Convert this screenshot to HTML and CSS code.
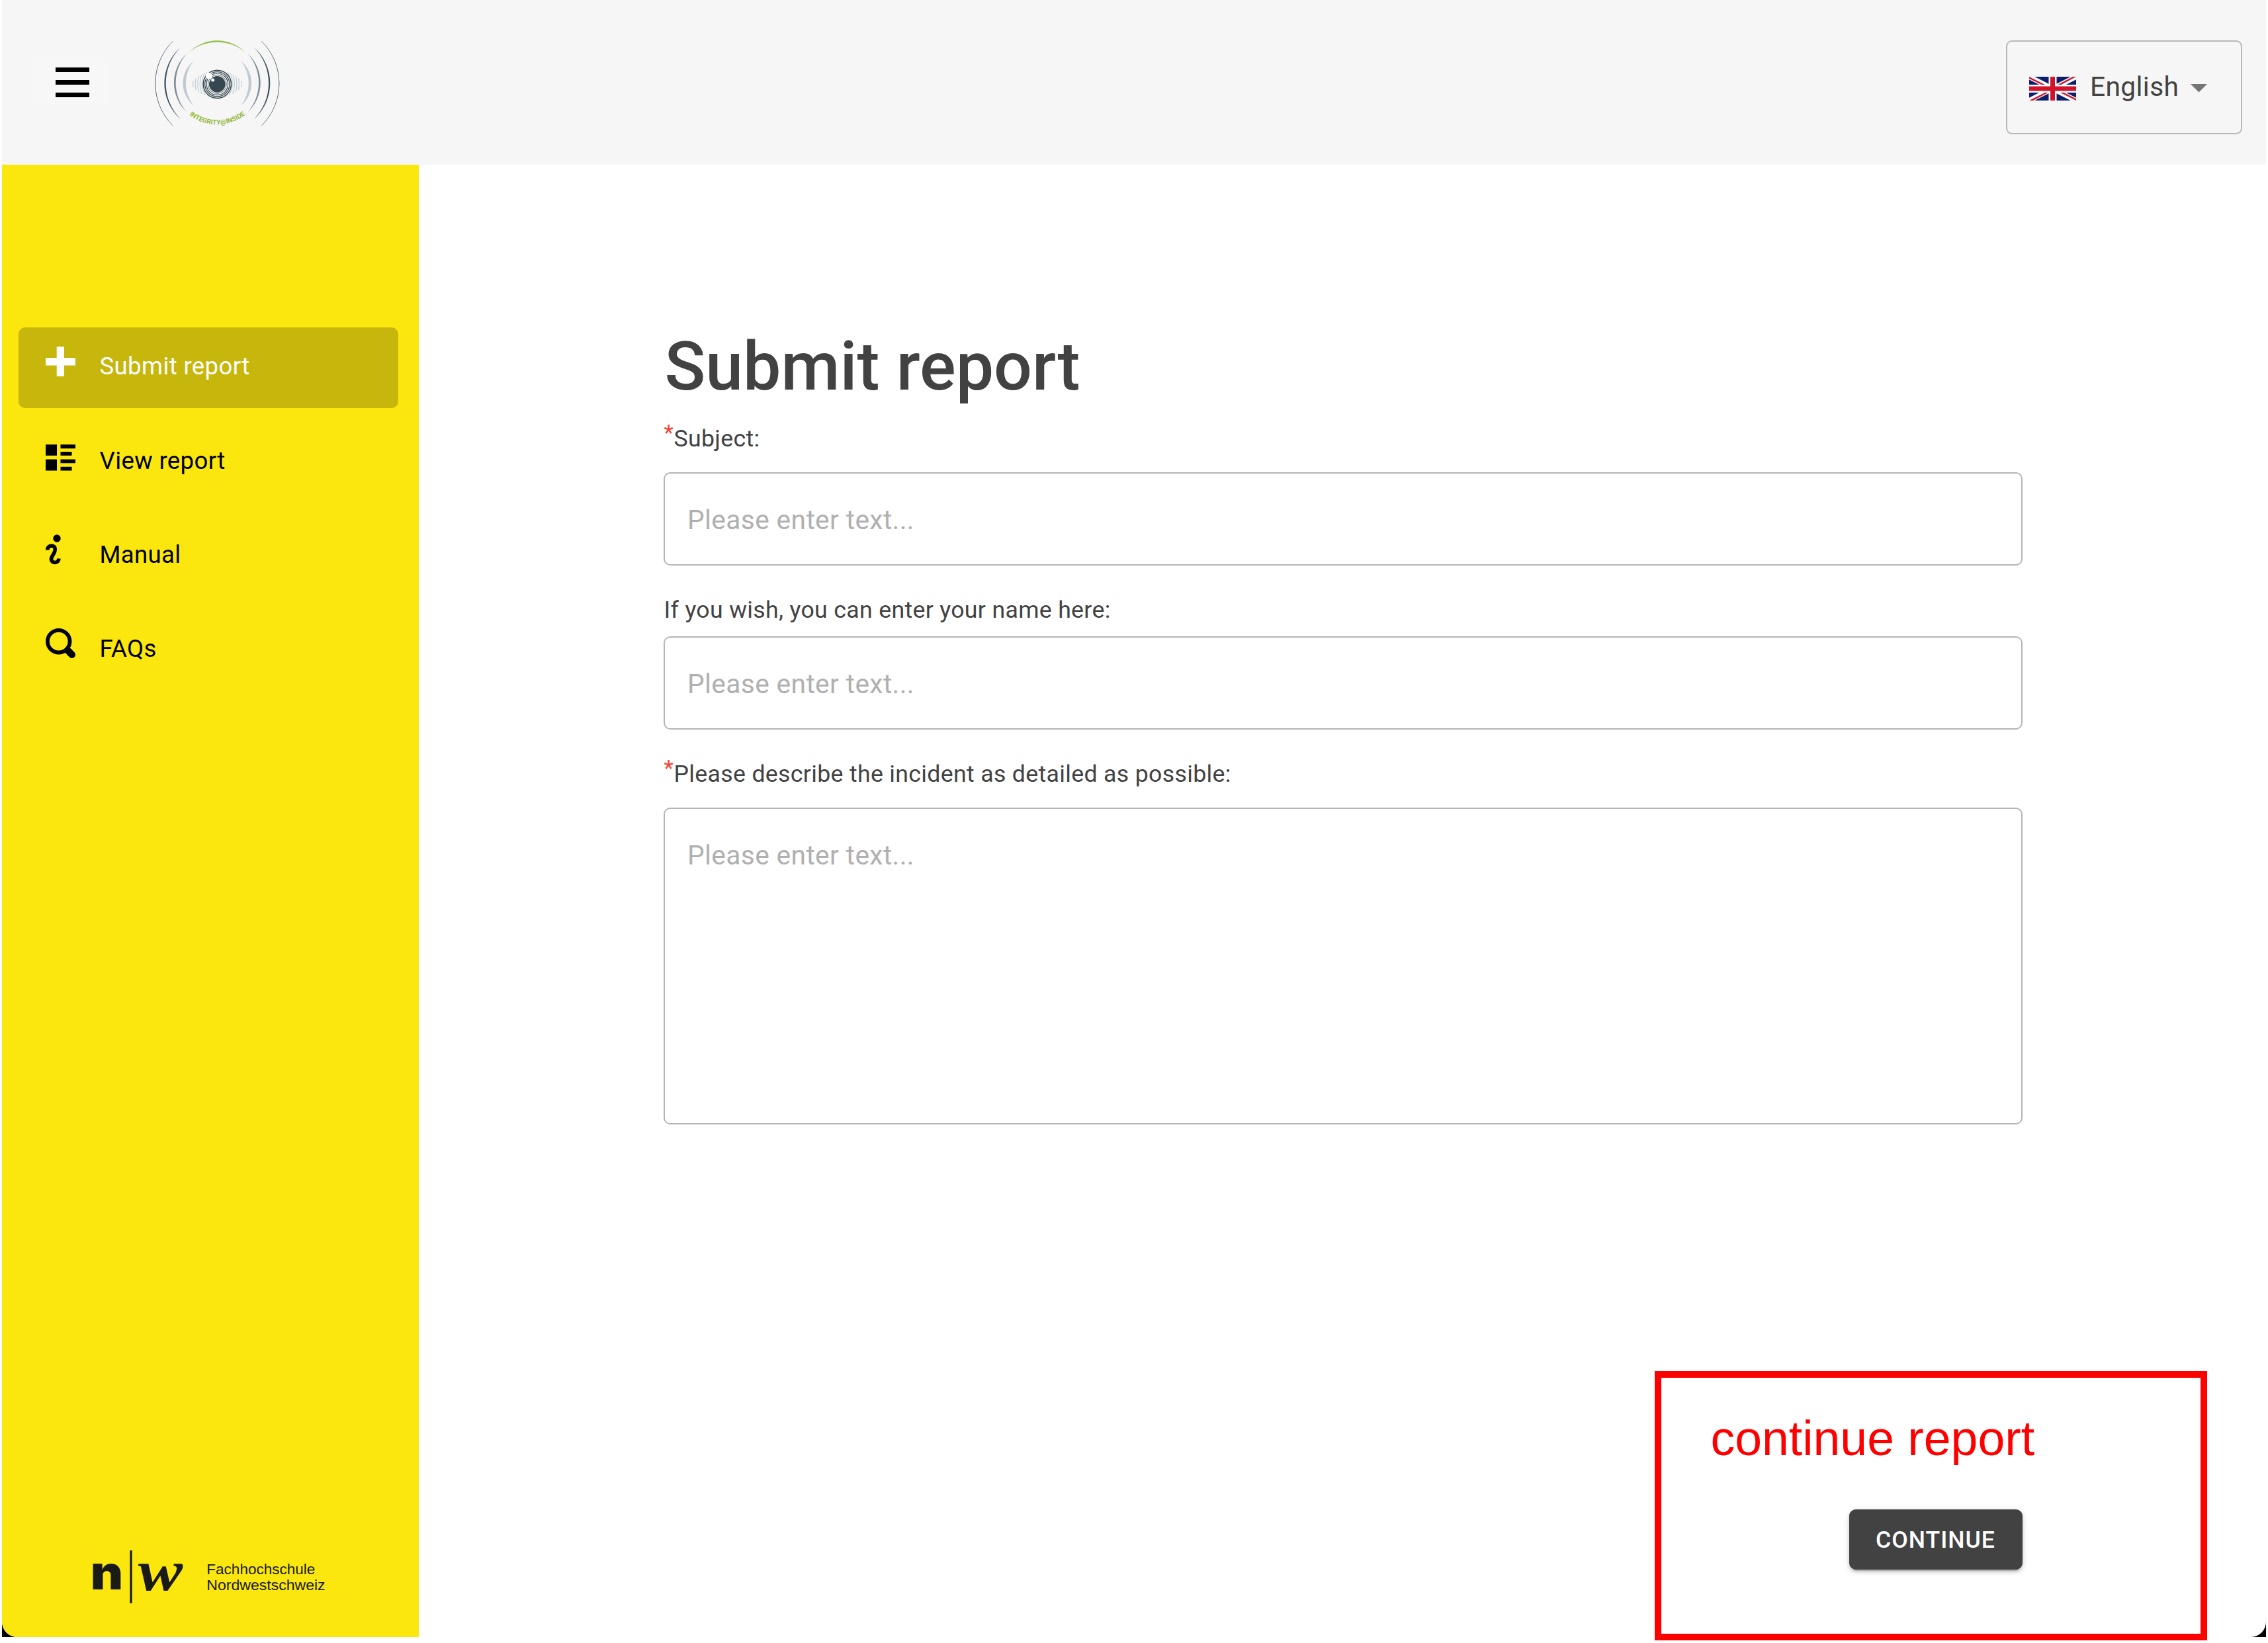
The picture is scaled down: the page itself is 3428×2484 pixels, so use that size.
FILE: index.html
```html
<!DOCTYPE html>
<html lang="en">
<head>
<meta charset="utf-8">
<title>Submit report</title>
<link rel="stylesheet" href="styles.css">
</head>
<body>
<div class="screen">
<div class="window">
  <header class="header">
    <button class="menu" aria-label="Menu">
      <svg width="51" height="45" viewBox="0 0 51 45"><path d="M0 0h51v7H0zM0 19h51v7H0zM0 38h51v7H0z"/></svg>
    </button>
    <svg class="eye" width="220" height="160" viewBox="0 0 660 480">
      <defs>
        <path id="motto" d="M198 401A205 205 0 0 0 460 394"/>
        <g id="waves">
          <path fill="#4f626d" d="M124 67A267 267 0 0 0 124 450A271 271 0 0 1 124 67"/>
          <path fill="none" stroke="#4f626d" stroke-width="2" d="M124 67A270 270 0 0 0 124 450"/>
          <path fill="#3f535e" d="M158 95A217.400 217.400 0 0 0 158 420A233 233 0 0 1 158 95"/>
          <path fill="#7c8d97" d="M186 124A181 181 0 0 0 186 388A202 202 0 0 1 186 124"/>
          <path fill="#bfcad2" d="M217 157A130 130 0 0 0 217 358A164 164 0 0 1 217 157"/>
          <g fill="none" stroke="#c6d0d7" stroke-width="4">
            <path d="M215 248v28M228 235q-5 27 0 54M241 225q-9 37 0 74M253 219q-13 44 2 88M265 213q-20 50 5 98M277 207q-28 60 8 110"/>
          </g>
        </g>
      </defs>
      <use href="#waves"/>
      <use href="#waves" transform="matrix(-1 0 0 1 650 0)"/>
      <path fill="#97bd4c" d="M198 117A178.700 178.700 0 0 1 452 117A198 198 0 0 0 198 117"/>
      <circle cx="325" cy="262" r="66" fill="#f6f6f6"/>
      <g fill="none" stroke="#354750">
        <circle cx="325" cy="262" r="63.500" stroke-width="4.500"/>
        <circle cx="325" cy="262" r="56" stroke-width="4"/>
        <circle cx="325" cy="262" r="49" stroke-width="3.500"/>
        <circle cx="325" cy="262" r="42" stroke-width="2.500"/>
      </g>
      <circle cx="325" cy="262" r="37" fill="#354750"/>
      <circle cx="287" cy="224" r="15" fill="#fff"/>
      <circle cx="305" cy="243" r="7.500" fill="#fff"/>
      <text class="motto"><textPath href="#motto" textLength="274" lengthAdjust="spacingAndGlyphs">INTEGRITY@INSIDE</textPath></text>
    </svg>
    <button class="lang">
      <svg width="71" height="36" viewBox="0 0 71 36">
        <path fill="#0e1e69" d="M0 0h71v36H0z"/>
        <path stroke="#fff" stroke-width="7.500" d="M0 0l71 36M71 0L0 36"/>
        <path fill="#cf142b" d="M0 0l28 14h-5.500L0 2.800zM71 0L48.500 12H43L66 0zM71 36L47 24h5.500L71 33.200zM0 36l24-12h5L6 36z"/>
        <path fill="#fff" d="M29.500 0h12v36h-12zM0 12h71v12H0z"/>
        <path fill="#cf142b" d="M32 0h7v36h-7zM0 14.500h71v7H0z"/>
      </svg>
      <span class="lang-name">English</span>
      <svg width="25" height="13" viewBox="0 0 25 13"><path fill="#757575" d="M0 0h25L12.500 12.500z"/></svg>
    </button>
  </header>
  <div class="body">
    <aside class="sidebar">
      <nav class="nav">
        <a class="item active">
          <svg class="icon" viewBox="0 0 45 45"><path d="M16.700 0h11.300v17H45v11.500H28V45H16.700V28.500H0V17h16.700z"/></svg>
          <span>Submit report</span>
        </a>
        <a class="item">
          <svg class="icon" viewBox="0 0 45 45"><path d="M0 6h17v16.700H0zM0 28.500h17v17H0zM22.500 6H45v6H22.500zM22.500 17h17v5.700h-17zM22.500 28.500H45v5.700H22.500zM22.500 39.700h17v5.800h-17z"/></svg>
          <span>View report</span>
        </a>
        <a class="item">
          <svg class="icon" viewBox="0 0 45 45"><circle cx="17" cy="6" r="5.700"/><path fill="none" stroke="currentColor" stroke-width="5.600" d="M2.700 23.500C2.800 18 7 17 9.500 17.300C14 17.800 15 21 13.800 25.500C12.800 29.500 8.400 33.500 8.400 37.500C8.800 44 19.500 44.500 20 36.500"/></svg>
          <span>Manual</span>
        </a>
        <a class="item">
          <svg class="icon" viewBox="0 0 45 45"><circle cx="19.700" cy="19.700" r="16.800" fill="none" stroke="currentColor" stroke-width="5.800"/><path stroke="currentColor" stroke-width="10.500" stroke-linecap="round" d="M34 34l5.700 5.700"/></svg>
          <span>FAQs</span>
        </a>
      </nav>
      <svg class="fhnw" width="367" height="110" viewBox="90 0 1101 330" fill="#1a1a18">
        <text class="logo-n" x="110" y="250" textLength="148" lengthAdjust="spacingAndGlyphs">n</text>
        <path d="M289 72h10v240h-10z"/>
        <text class="logo-w" x="326" y="251" textLength="202" lengthAdjust="spacingAndGlyphs">w</text>
        <text class="logo-t" x="637" y="180" textLength="492" lengthAdjust="spacingAndGlyphs">Fachhochschule</text>
        <text class="logo-t" x="637" y="252" textLength="538" lengthAdjust="spacingAndGlyphs">Nordwestschweiz</text>
      </svg>
    </aside>
    <main class="main">
      <form class="form">
        <h1 class="title">Submit report</h1>
        <label class="label gap-lg" for="subject"><span class="req">*</span>Subject:</label>
        <input class="field" id="subject" placeholder="Please enter text...">
        <label class="label gap-sm" for="name">If you wish, you can enter your name here:</label>
        <input class="field" id="name" placeholder="Please enter text...">
        <label class="label gap-lg" for="text"><span class="req">*</span>Please describe the incident as detailed as possible:</label>
        <textarea class="field area" id="text" placeholder="Please enter text..."></textarea>
        <button class="continue" type="button">CONTINUE</button>
      </form>
    </main>
  </div>
</div>
</div>
<div class="note">continue report</div>
</body>
</html>
```

FILE: styles.css
```css
* { box-sizing: border-box; }
body {
  margin: 0;
  background: #fff;
  font-family: Roboto, sans-serif;
  color: #424242;
  width: 3428px;
  height: 2484px;
  position: relative;
  overflow: hidden;
}
button { font: inherit; color: inherit; border: 0; padding: 0; }
svg { display: block; flex: none; }

.screen { width: 3422px; height: 2475px; margin-left: 3px; background: #000; }
.window {
  height: 100%;
  display: flex;
  flex-direction: column;
  background: #fff;
  border-radius: 0 0 23px 23px;
  overflow: hidden;
}

.header {
  height: 249px;
  flex: none;
  display: flex;
  align-items: flex-start;
  padding: 40px 36px 0 47px;
  background: #f6f6f6;
}
.menu {
  display: flex;
  align-items: flex-start;
  width: 115px;
  height: 76px;
  margin: 45px 55px 0 0;
  padding: 17px 0 0 34px;
  background: #f7f7f7;
  border-radius: 9px;
  color: #000;
}
.lang {
  margin: 21px 0 0 auto;
  width: 357px;
  height: 142px;
  display: flex;
  align-items: center;
  padding: 0 0 0 33px;
  background: none;
  border: 2px solid #b8b8b8;
  border-radius: 9px;
}
.lang svg { margin-top: 3px; }
.lang-name {
  width: 152px;
  margin: -2px 0 0 21px;
  text-align: left;
  font-size: 40.700px;
  line-height: 48px;
  letter-spacing: .00938em;
}
.motto { font: 700 30px Roboto, sans-serif; fill: #8fb83f; }

.body { flex: 1; display: flex; min-height: 0; }
.sidebar {
  width: 629.500px;
  flex: none;
  display: flex;
  flex-direction: column;
  justify-content: space-between;
  background: #fbe70e;
  padding: 246px 30.500px 45px 25px;
}
.nav { display: flex; flex-direction: column; gap: 20px; }
.item {
  height: 122px;
  display: flex;
  align-items: flex-start;
  gap: 36.500px;
  padding-left: 41px;
  border-radius: 10px;
  color: #000;
  font-size: 36.600px;
  line-height: 42px;
  letter-spacing: .35px;
}
.item span { margin-top: 38.500px; }
.icon { width: 45px; height: 45px; margin-top: 28.500px; fill: currentColor; overflow: visible; }
.active { background: #c7b70c; color: #fff; }
.active span { margin-top: 38px; }
.fhnw { margin-left: 102px; }
.logo-n { font: 900 212px Inter, sans-serif; }
.logo-w { font: italic 700 262px "Liberation Serif", serif; }
.logo-t { font: 400 67px "Liberation Sans", sans-serif; }

.main { flex: 1; padding: 245px 368.500px 102px 370.500px; }
.form { height: 100%; display: flex; flex-direction: column; align-items: flex-start; }
.title { margin: 0 0 28px 1.500px; font-size: 102.100px; line-height: 120px; font-weight: 500; }
.label {
  margin-left: .500px;
  font-size: 35.650px;
  line-height: 42px;
  letter-spacing: .00938em;
}
.gap-lg { margin-bottom: 30px; }
.gap-sm { margin-bottom: 19px; }
.req {
  display: inline-block;
  width: 15px;
  font-size: 33px;
  line-height: 0;
  vertical-align: 9px;
  color: #ff3b30;
}
.field {
  width: 100%;
  height: 141px;
  flex: none;
  margin: 0 0 46px;
  padding: 3px 34px 0;
  border: 2px solid #b5b5b5;
  border-radius: 10px;
  background: #fff;
  font: 400 40.700px/48px Roboto, sans-serif;
  letter-spacing: .00938em;
  resize: none;
}
.field::placeholder { color: #b0b0b0; opacity: 1; }
.area { height: 479px; padding-top: 46px; margin: 0; }
.continue {
  margin: auto 0 0 auto;
  width: 262px;
  height: 91px;
  background: #424242;
  color: #fff;
  border-radius: 10px;
  font-size: 35.600px;
  font-weight: 500;
  letter-spacing: .02857em;
  box-shadow: 0 7px 2px -5px rgba(0,0,0,.2), 0 4px 5px rgba(0,0,0,.14), 0 2px 11px rgba(0,0,0,.12);
}

/* Annotation laid over the page */
.note {
  position: absolute;
  left: 2501px;
  top: 2073px;
  width: 835px;
  height: 407px;
  border: 10px solid #f00;
  padding: 50px 0 0 74.500px;
  color: #f00;
  font: 73.400px/84px "Liberation Sans", Arial, sans-serif;
}
```
